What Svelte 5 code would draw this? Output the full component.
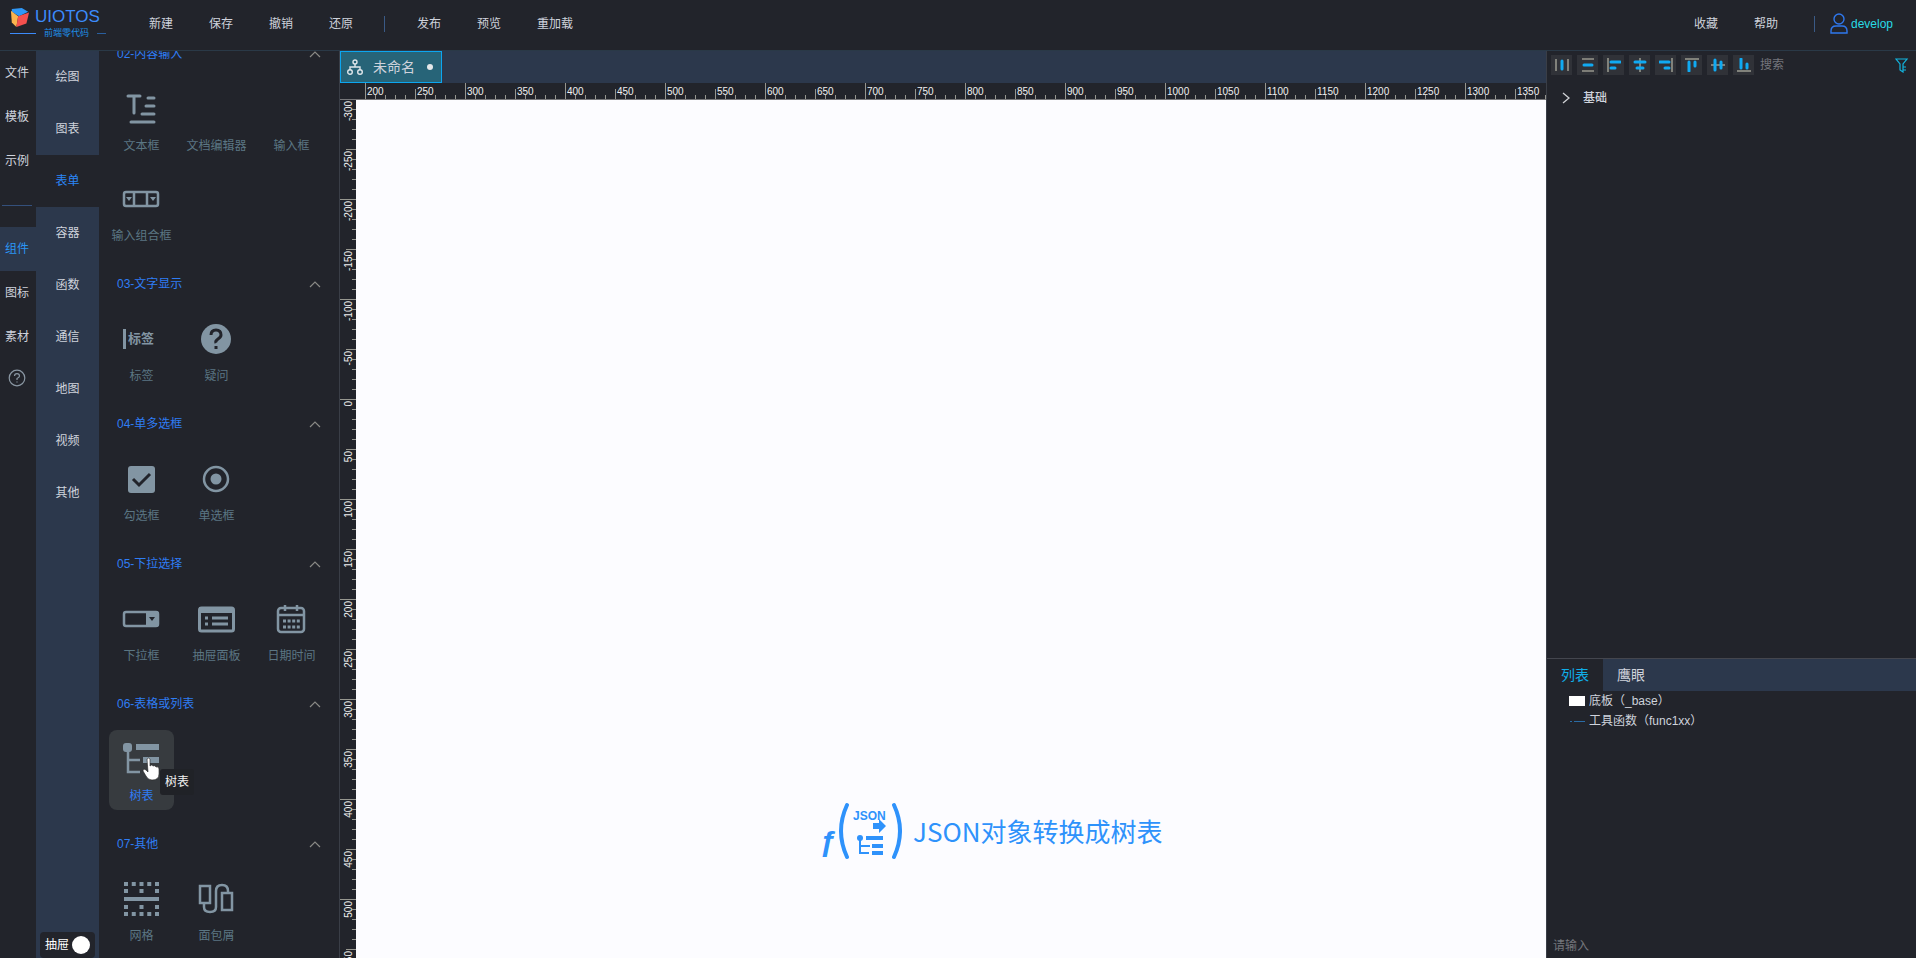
<script lang="ts">
  const fileMenu = ['新建', '保存', '撤销', '还原'];
  const publishMenu = ['发布', '预览', '重加载'];
  const fileNav = ['文件', '模板', '示例'];
  const resourceNav = ['组件', '图标', '素材'];
  const categories = ['绘图', '图表', '表单', '容器', '函数', '通信', '地图', '视频', '其他'];

  const groups = [
    {
      title: '02-内容输入',
      items: [
        { label: '文本框', icon: 'text' },
        { label: '文档编辑器', icon: '' },
        { label: '输入框', icon: '' },
        { label: '输入组合框', icon: 'combo' },
      ],
    },
    {
      title: '03-文字显示',
      items: [
        { label: '标签', icon: 'label' },
        { label: '疑问', icon: 'question' },
      ],
    },
    {
      title: '04-单多选框',
      items: [
        { label: '勾选框', icon: 'check' },
        { label: '单选框', icon: 'radio' },
      ],
    },
    {
      title: '05-下拉选择',
      items: [
        { label: '下拉框', icon: 'select' },
        { label: '抽屉面板', icon: 'drawer' },
        { label: '日期时间', icon: 'date' },
      ],
    },
    { title: '06-表格或列表', items: [{ label: '树表', icon: 'tree' }] },
    {
      title: '07-其他',
      items: [
        { label: '网格', icon: 'grid' },
        { label: '面包屑', icon: 'crumb' },
      ],
    },
  ];

  // guide = grey reference line, bars = blue blocks
  const alignTools = [
    { name: '水平分布', guide: 'M1 1V13M13 1V13', bars: 'M7 3V11' },
    { name: '垂直分布', guide: 'M1 1H13M1 13H13', bars: 'M3 7H11' },
    { name: '左对齐', guide: 'M1 0V14', bars: 'M4 4H13M4 10H8' },
    { name: '水平居中', guide: 'M7 0V14', bars: 'M2 4H12M4 10H10' },
    { name: '右对齐', guide: 'M13 0V14', bars: 'M1 4H10M6 10H10' },
    { name: '顶对齐', guide: 'M0 1H14', bars: 'M4 4V13M10 4V8' },
    { name: '垂直居中', guide: 'M0 7H14', bars: 'M4 2V12M10 4V10' },
    { name: '底对齐', guide: 'M0 13H14', bars: 'M4 1V10M10 6V10' },
  ];

  function ticks(from: number, to: number) {
    const list = [];
    for (let v = from; v <= to; v += 10) list.push(v);
    return list;
  }

  function tickSize(v: number) {
    if (v % 100 === 0) return 17;
    return v % 50 === 0 ? 11 : 5;
  }

  let rulerWidth = $state(0);
  let stageHeight = $state(0);
  let activeCategory = $state('表单');
  let activeResource = $state('组件');

  let xTicks = $derived(ticks(200, rulerWidth + 175));
  let yTicks = $derived(ticks(-300, stageHeight - 299));
</script>

<div class="app">
  <header class="header">
    <a class="logo" href="#home">
      <svg class="cube" width="20" height="22" viewBox="0 0 20 22">
        <path d="M1 1L12 0L19 4L9 9L1 4Z" fill="#2f97f5" />
        <path d="M0 3L8 9L6 21L1 16Z" fill="#fbb44e" />
        <path d="M8 9L20 5L17 17L6 21Z" fill="#f4504e" />
      </svg>
      <span class="brand">UIOTOS</span>
      <span class="slogan"><i class="long"></i>前端零代码<i></i></span>
    </a>
    <nav class="menu">
      {#each fileMenu as item}
        <button>{item}</button>
      {/each}
      <span class="sep"></span>
      {#each publishMenu as item}
        <button>{item}</button>
      {/each}
    </nav>
    <nav class="menu user-menu">
      <button>收藏</button>
      <button>帮助</button>
      <span class="sep"></span>
      <a class="user" href="#user">
        <svg width="18" height="22" viewBox="0 0 18 22" fill="none" stroke="#2f78ee" stroke-width="1.4">
          <circle cx="9" cy="6" r="5" />
          <path d="M1 20V18Q1 13 6 13H12Q17 13 17 18V20Z" />
        </svg>
        develop
      </a>
    </nav>
  </header>

  <div class="body">
    <nav class="rail">
      {#each fileNav as item}
        <button>{item}</button>
      {/each}
      <hr />
      {#each resourceNav as item}
        <button class:active={item === activeResource} onclick={() => (activeResource = item)}>{item}</button>
      {/each}
      <button class="help" aria-label="帮助">
        <svg width="18" height="18" viewBox="0 0 18 18" fill="none" stroke="#8a97a3" stroke-width="1.2">
          <circle cx="9" cy="9" r="7.8" />
          <path d="M6.5 7Q6.5 4.6 9 4.6T11.5 7Q11.5 8.2 9 9.6V11M9 12.4V13.6" />
        </svg>
      </button>
    </nav>

    <nav class="categories">
      {#each categories as item}
        <button class:active={item === activeCategory} onclick={() => (activeCategory = item)}>{item}</button>
      {/each}
      <label class="drawer-switch">抽屉<input type="checkbox" /></label>
    </nav>

    <aside class="palette">
      <div class="palette-scroll">
        {#each groups as group}
          <section>
            <h2>
              {group.title}
              <svg width="12" height="7" viewBox="0 0 12 7" fill="none" stroke="#8a8a86" stroke-width="1.2">
                <path d="M1 6L6 1L11 6" />
              </svg>
            </h2>
            <div class="items">
              {#each group.items as item}
                <button class="item" class:hovered={item.icon === 'tree'}>
                  <svg class="item-icon" width="36" height="36" viewBox="1 0 36 36">
                    {#if item.icon === 'text'}
                      <path class="line bold" stroke-linecap="round" d="M5 5H17M11 5V22M25 7H31M23 15H31M19 23H31M8 31H31" />
                    {:else if item.icon === 'combo'}
                      <rect class="line" x="1" y="11" width="34" height="14" rx="2" />
                      <path class="line" d="M11 11V25M24 11V25" />
                      <path class="fill" d="M3 16H9L6 20ZM27 16H33L30 20Z" />
                    {:else if item.icon === 'label'}
                      <path class="fill" d="M0 8H3V28H0Z" />
                      <text class="fill" x="5" y="22">标签</text>
                    {:else if item.icon === 'question'}
                      <circle class="fill" cx="18" cy="18" r="15" />
                      <path class="cut" d="M13 14Q13 9 18 9T23 14Q23 16 20 18T18 22M18 25V28" />
                    {:else if item.icon === 'check'}
                      <rect class="fill" x="5" y="5" width="27" height="27" rx="3" />
                      <path class="cut" d="M10 18L16 24L27 13" />
                    {:else if item.icon === 'radio'}
                      <circle class="line" cx="18" cy="18" r="12" />
                      <circle class="fill" cx="18" cy="18" r="5.5" />
                    {:else if item.icon === 'select'}
                      <rect class="line" x="1" y="11" width="34" height="14" rx="2" />
                      <path class="fill" d="M23 10H34L36 12V24L34 26H23Z" />
                      <path class="hole" d="M26 16H32L29 20Z" />
                    {:else if item.icon === 'drawer'}
                      <rect class="line bold" x="1.5" y="7" width="34" height="23" rx="2" />
                      <path class="fill" d="M1 6H35V12H1Z" />
                      <path class="line bold" d="M7 17H10M7 23H10M14 17H30M14 23H30" />
                    {:else if item.icon === 'date'}
                      <rect class="line" x="5" y="7" width="26" height="24" rx="3" />
                      <path class="line" d="M12 4V10M24 4V10M5 14H31" />
                      <path class="line bold" stroke-dasharray="3 1.6" d="M10 20H27M10 26H27" />
                    {:else if item.icon === 'tree'}
                      <rect class="fill" x="0" y="2" width="9" height="9" rx="3" />
                      <path class="line" d="M5 10V31H17M5 19H17" />
                      <path class="fill" d="M13 3H36V9H13ZM20 16H36V22H20Z" />
                    {:else if item.icon === 'grid'}
                      <path class="line dots" stroke-dasharray="4 3.75" d="M1 3H36M1 33H36" />
                      <path class="line dots" stroke-dasharray="4 11.5" d="M1 10H36M1 26H36" />
                      <path class="fill" d="M1 16H36V20H1Z" />
                    {:else if item.icon === 'crumb'}
                      <path class="line" d="M2 5H12V22H2ZM24 12H34V29H24ZM6 22V26Q6 31 12 31T18 26V10Q18 4 24 4T30 10V12" />
                    {/if}
                  </svg>
                  <span>{item.label}</span>
                  {#if item.icon === 'tree'}
                    <span class="tooltip">{item.label}</span>
                    <svg class="pointer" width="18" height="24" viewBox="0 0 18 24">
                      <path
                        d="M5 2Q7 0 8 2V9Q10 7 11 9Q13 8 14 10Q17 9 17 12V17Q17 23 10 23Q6 23 4 19L1 14Q1 11 4 13L6 15Z"
                        fill="#fff"
                        stroke="#222"
                        stroke-width="0.6"
                      />
                    </svg>
                  {/if}
                </button>
              {/each}
            </div>
          </section>
        {/each}
      </div>
    </aside>

    <main class="editor">
      <div class="tabs">
        <button class="tab">
          <svg width="16" height="17" viewBox="0 0 16 17" fill="none" stroke="#dfe6ea" stroke-width="1.4">
            <circle cx="8" cy="3" r="2" />
            <circle cx="3" cy="13" r="2.3" />
            <circle cx="13" cy="13" r="2.3" />
            <path d="M8 5V8M3 11V8H13V11" />
          </svg>
          <span>未命名</span>
          <i class="dirty"></i>
        </button>
      </div>
      <div class="ruler-x" bind:clientWidth={rulerWidth}>
        <svg width="100%" height="17">
          {#each xTicks as v}
            <path d="M{v - 175} {17 - tickSize(v)}V17" />
            {#if v % 50 === 0}
              <text x={v - 173} y="12">{v}</text>
            {/if}
          {/each}
        </svg>
      </div>
      <div class="stage" bind:clientHeight={stageHeight}>
        <svg class="ruler-y">
          {#each yTicks as v}
            <path d="M{17 - tickSize(v)} {v + 299}H17" />
            {#if v % 50 === 0}
              <text transform="translate(12 {v + 301}) rotate(-90)">{v}</text>
            {/if}
          {/each}
        </svg>
        <div class="canvas">
          <div class="node">
            <svg width="82" height="58" viewBox="0 0 82 58" fill="#2e92fb">
              <text class="fx" x="0" y="49">ƒ</text>
              <path d="M27 3Q15 29 27 55M74 3Q86 29 74 55" fill="none" stroke="#2e92fb" stroke-width="4" stroke-linecap="round" />
              <text class="json" x="33" y="18">JSON</text>
              <path d="M53 21H59V17L66 24L59 31V27H53Z" />
              <circle cx="40" cy="36" r="3" />
              <path d="M39 37H41V43H50V45H41V50H49V52H39ZM46 34H63V38H46ZM52 42H63V46H52ZM52 49H63V53H52Z" />
            </svg>
            <span>JSON对象转换成树表</span>
          </div>
        </div>
      </div>
    </main>

    <aside class="side">
      <section class="inspector">
        <div class="toolbar">
          {#each alignTools as tool}
            <button aria-label={tool.name}>
              <svg width="14" height="14" viewBox="0 0 14 14" fill="none">
                <path d={tool.guide} stroke="#96968c" stroke-width="1.6" />
                <path d={tool.bars} stroke="#10aaf2" stroke-width="3" stroke-linecap="round" />
              </svg>
            </button>
          {/each}
          <input type="text" placeholder="搜索" aria-label="搜索" />
          <svg width="14" height="15" viewBox="0 0 14 15" fill="none" stroke="#12b5e0" stroke-width="1.2">
            <path d="M1 1H12L8 6V14L5 12V6ZM8 9H11M8 12H11" />
          </svg>
        </div>
        <button class="fold">
          <svg width="8" height="12" viewBox="0 0 8 12" fill="none" stroke="#d0d2d6" stroke-width="1.3">
            <path d="M1 1L7 6L1 11" />
          </svg>
          基础
        </button>
      </section>

      <section class="outline">
        <div class="outline-tabs">
          <button class="active">列表</button>
          <button>鹰眼</button>
        </div>
        <ul>
          <li><i class="swatch"></i>底板（_base）</li>
          <li>
            <svg width="16" height="10" viewBox="0 0 16 10" stroke="#2a6ca6" stroke-width="1">
              <path d="M1 5.5H3M5 5.5H16" />
            </svg>
            工具函数（func1xx）
          </li>
        </ul>
        <input type="text" placeholder="请输入" aria-label="请输入" />
      </section>
    </aside>
  </div>
</div>

<style>
  :global(body) {
    margin: 0;
    background: #22242b;
  }

  .app {
    --dark: #22242b;
    --mid: #2c384c;
    --line: #2a3947;
    --text: #cfd3dc;
    --blue: #2f7df5;
    --icon: #8295a3;

    display: flex;
    flex-direction: column;
    height: 100vh;
    overflow: hidden;
    background: var(--dark);
    color: var(--text);
    font-family: 'Liberation Sans', 'Noto Sans CJK SC', sans-serif;
    font-size: 12px;
    line-height: 16px;
  }

  button,
  input {
    margin: 0;
    padding: 0;
    border: 0;
    background: none;
    color: inherit;
    font: inherit;
  }

  button {
    cursor: pointer;
  }

  a {
    color: inherit;
    text-decoration: none;
  }

  svg {
    flex: none;
    display: block;
  }

  /* header */
  .header {
    display: flex;
    align-items: center;
    height: 51px;
    flex: none;
    border-bottom: 1px solid var(--line);
    box-sizing: border-box;
    padding: 0 23px 0 10px;
  }

  .logo {
    display: grid;
    grid-template-columns: 25px 74px;
    width: 139px;
    padding-bottom: 4px;
    color: #3c8bfb;
  }

  .brand {
    font-size: 17px;
    line-height: 18px;
  }

  .cube {
    height: 20px;
  }

  .slogan {
    grid-column: 1 / 3;
    display: flex;
    align-items: center;
    gap: 8px;
    font-size: 9px;
    line-height: 10px;
    color: #1f8fe8;
  }

  .slogan i {
    width: 9px;
    height: 1px;
    background: #2a5f9e;
  }

  .slogan .long {
    width: 26px;
    background: #3c8bfb;
  }

  .menu {
    display: flex;
    align-items: center;
    gap: 36px;
    padding-bottom: 2px;
  }

  .sep {
    width: 1px;
    height: 16px;
    margin: 0 -4px 0 -5px;
    background: #3a5a86;
  }

  .user-menu {
    margin-left: auto;
  }

  .user-menu .sep {
    margin: 0 -21px 0 0;
  }

  .user {
    display: flex;
    align-items: center;
    gap: 3px;
    color: #29dbe6;
  }

  .body {
    display: flex;
    flex: 1;
    min-height: 0;
  }

  /* left navigation */
  .rail {
    display: flex;
    flex-direction: column;
    width: 36px;
    flex: none;
  }

  .rail button {
    height: 44px;
    flex: none;
    padding-right: 2px;
  }

  .rail hr {
    width: 30px;
    margin: 22px auto 21px 2px;
    border: 0;
    border-top: 1px solid #34507c;
  }

  .rail .active {
    background: var(--mid);
    color: #2b96f5;
  }

  .rail .help {
    display: flex;
    align-items: center;
    padding-left: 8px;
    height: 38px;
  }

  .categories {
    display: flex;
    flex-direction: column;
    width: 63px;
    flex: none;
    background: var(--mid);
  }

  .categories button {
    height: 52px;
    flex: none;
  }

  .categories .active {
    background: var(--dark);
    color: #2b86f7;
  }

  .drawer-switch {
    display: flex;
    align-items: center;
    gap: 3px;
    height: 26px;
    margin: auto 4px 0;
    padding-left: 5px;
    border-radius: 4px;
    background: var(--dark);
    color: #fff;
  }

  .drawer-switch input {
    width: 18px;
    height: 18px;
    border-radius: 9px;
    background: #fff;
    appearance: none;
  }

  /* component palette */
  .palette {
    width: 240px;
    flex: none;
    overflow: hidden;
  }

  .palette-scroll {
    margin-top: -18px;
  }

  .palette section {
    padding: 0 5px 8px;
  }

  h2 {
    display: flex;
    align-items: center;
    justify-content: space-between;
    height: 42px;
    margin: 0;
    padding: 0 13px;
    color: var(--blue);
    font-size: 12px;
    font-weight: 400;
  }

  .items {
    display: grid;
    grid-template-columns: repeat(3, 75px);
  }

  .item {
    position: relative;
    display: flex;
    flex-direction: column;
    align-items: center;
    gap: 11px;
    height: 80px;
    margin: 5px;
    padding-top: 11px;
    box-sizing: border-box;
    border-radius: 8px;
    color: #5b7683;
    white-space: nowrap;
  }

  .hovered {
    background: #373b3f;
    color: var(--blue);
  }

  .item-icon {
    overflow: visible;
  }

  .item-icon text {
    font-size: 13px;
    font-weight: 700;
  }

  .fill {
    fill: var(--icon);
  }

  .line {
    fill: none;
    stroke: var(--icon);
    stroke-width: 2.5;
  }

  .bold {
    stroke-width: 3;
  }

  .dots {
    stroke-width: 4;
  }

  .cut {
    fill: none;
    stroke: var(--dark);
    stroke-width: 3;
  }

  .hole {
    fill: var(--dark);
  }

  .tooltip {
    position: absolute;
    top: 39px;
    left: 51px;
    padding: 5px;
    border-radius: 3px;
    background: #202227;
    color: #f2f2f2;
  }

  .pointer {
    position: absolute;
    top: 27px;
    left: 33px;
  }

  /* editor */
  .editor {
    display: flex;
    flex-direction: column;
    flex: 1;
    min-width: 0;
    border: solid #3a3e47;
    border-width: 0 1px;
  }

  .tabs {
    display: flex;
    height: 32px;
    flex: none;
    background: var(--mid);
  }

  .tab {
    display: flex;
    align-items: center;
    gap: 10px;
    padding: 0 8px 0 6px;
    border: 1px solid #0ca6f0;
    background: #276478;
    font-size: 14px;
  }

  .dirty {
    width: 6px;
    height: 6px;
    margin-left: 2px;
    border-radius: 3px;
    background: #e4e8ea;
  }

  .ruler-x,
  .ruler-y {
    flex: none;
    overflow: hidden;
    stroke: #96968f;
    stroke-width: 1;
    shape-rendering: crispEdges;
  }

  .ruler-x {
    height: 16px;
    border-bottom: 1px solid #77777a;
  }

  .ruler-y {
    width: 16px;
    height: 100%;
  }

  .ruler-x text,
  .ruler-y text {
    fill: #f0f0f0;
    stroke: none;
    font-size: 10px;
  }

  .ruler-y text {
    text-anchor: end;
  }

  .stage {
    display: flex;
    flex: 1;
    min-height: 0;
  }

  .canvas {
    position: relative;
    flex: 1;
    overflow: hidden;
    background: #fcfcff;
  }

  .node {
    position: absolute;
    top: 702px;
    left: 464px;
    display: flex;
    align-items: center;
    gap: 11px;
    color: #2e92fb;
    font-family: 'Noto Sans CJK SC', sans-serif;
    font-size: 26px;
    line-height: 36px;
    white-space: nowrap;
  }

  .node .fx {
    font-family: 'Liberation Sans', sans-serif;
    font-size: 30px;
    font-weight: 700;
  }

  .node .json {
    font-family: 'Liberation Sans Narrow', 'Liberation Sans', sans-serif;
    font-size: 12px;
    font-weight: 700;
  }

  /* right side */
  .side {
    display: flex;
    flex-direction: column;
    width: 369px;
    flex: none;
  }

  .inspector {
    flex: 67 1 0;
  }

  .toolbar {
    display: flex;
    align-items: center;
    gap: 5px;
    padding: 4px 7px 0 4px;
  }

  .toolbar button {
    display: flex;
    align-items: center;
    justify-content: center;
    width: 21px;
    height: 20px;
    background: #303238;
  }

  .toolbar input {
    flex: 1;
    min-width: 0;
    padding-left: 1px;
  }

  input::placeholder {
    color: #74767c;
    opacity: 1;
  }

  .fold {
    display: flex;
    align-items: center;
    gap: 13px;
    margin-top: 15px;
    padding-left: 15px;
    font-weight: 500;
  }

  .outline {
    display: flex;
    flex-direction: column;
    flex: 33 1 0;
    border-top: 1px solid #44464e;
  }

  .outline-tabs {
    display: flex;
    height: 32px;
    background: var(--mid);
    font-size: 14px;
  }

  .outline-tabs button {
    width: 56px;
  }

  .outline-tabs .active {
    background: var(--dark);
    color: #10aee8;
  }

  ul {
    flex: 1;
    margin: 0;
    padding: 0 0 0 22px;
    list-style: none;
  }

  li {
    display: flex;
    align-items: center;
    gap: 4px;
    height: 20px;
  }

  .swatch {
    width: 16px;
    height: 10px;
    background: #fff;
  }

  .outline input {
    height: 24px;
    padding-left: 6px;
  }
</style>
